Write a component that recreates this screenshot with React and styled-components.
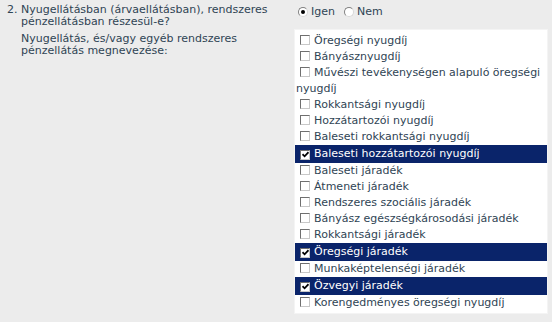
import styled, { createGlobalStyle } from "styled-components";

const GlobalStyle = createGlobalStyle`
  html, body {
    margin: 0;
    padding: 0;
    background: #ececec;
  }
  body {
    font-family: "DejaVu Sans", Verdana, sans-serif;
    font-size: 11px;
    color: #2f4454;
  }
`;

const items = [
  { label: "Öregségi nyugdíj" },
  { label: "Bányásznyugdíj" },
  { label: "Művészi tevékenységen alapuló öregségi nyugdíj" },
  { label: "Rokkantsági nyugdíj" },
  { label: "Hozzátartozói nyugdíj" },
  { label: "Baleseti rokkantsági nyugdíj" },
  { label: "Baleseti hozzátartozói nyugdíj", checked: true },
  { label: "Baleseti járadék" },
  { label: "Átmeneti járadék" },
  { label: "Rendszeres szociális járadék" },
  { label: "Bányász egészségkárosodási járadék" },
  { label: "Rokkantsági járadék" },
  { label: "Öregségi járadék", checked: true },
  { label: "Munkaképtelenségi járadék" },
  { label: "Özvegyi járadék", checked: true },
  { label: "Korengedményes öregségi nyugdíj" },
];

// pipa a bejelölt dobozokba
const Tick = () => (
  <svg width="7" height="7" viewBox="0 0 7 7">
    <path d="M0.5 3.2 L2.6 5.3 L6.5 1.2" fill="none" stroke="#000" strokeWidth="1.8" />
  </svg>
);

const App = () => {
  return (
    <>
      <GlobalStyle />
      <St.Form>
        <St.Row>
          <St.Label>
            <St.Num>2.</St.Num>
            <span>Nyugellátásban (árvaellátásban), rendszeres pénzellátásban részesül-e?</span>
          </St.Label>
          <St.RadioGroup>
            <St.RadioLabel>
              <St.Radio $checked />
              Igen
            </St.RadioLabel>
            <St.RadioLabel>
              <St.Radio />
              Nem
            </St.RadioLabel>
          </St.RadioGroup>
        </St.Row>

        <St.Row>
          <St.SubLabel>Nyugellátás, és/vagy egyéb rendszeres pénzellátás megnevezése:</St.SubLabel>
          <St.ListBox>
            {items.map((item) => (
              <St.Item key={item.label} $checked={item.checked}>
                <St.Check>{item.checked && <Tick />}</St.Check>
                {item.label}
              </St.Item>
            ))}
          </St.ListBox>
        </St.Row>
      </St.Form>
    </>
  );
};

export default App;

const St = {
  Form: styled.div`
    display: flex;
    flex-direction: column;
    gap: 1px;
    padding-top: 4px;
  `,

  Row: styled.div`
    display: grid;
    grid-template-columns: 294px 254px;
    align-items: start;
  `,

  Label: styled.div`
    display: flex;
    padding-left: 7px;
    padding-right: 20px;
    line-height: 12px;
  `,

  Num: styled.span`
    flex: none;
    width: 14px;
  `,

  SubLabel: styled.div`
    padding-left: 21px;
    padding-right: 30px;
    padding-top: 4px;
    line-height: 12px;
  `,

  RadioGroup: styled.div`
    display: flex;
    gap: 9px;
    padding-left: 4px;
    padding-top: 1px;
  `,

  RadioLabel: styled.label`
    display: flex;
    align-items: center;
    gap: 3px;
  `,

  Radio: styled.span`
    position: relative;
    box-sizing: border-box;
    width: 10px;
    height: 10px;
    border-radius: 50%;
    border: 1px solid;
    border-color: #808080 #d8d8d8 #d8d8d8 #808080;
    background: #fff;

    &::after {
      content: "";
      display: ${({ $checked }) => ($checked ? "block" : "none")};
      position: absolute;
      left: 2px;
      top: 2px;
      width: 4px;
      height: 4px;
      border-radius: 50%;
      background: #000;
    }
  `,

  ListBox: styled.div`
    box-sizing: border-box;
    background: #fff;
    border: 1px solid #f4f4f4;
    padding: 3px 0 2px;
  `,

  Item: styled.div`
    line-height: 16px;
    padding: ${({ $checked }) => ($checked ? "1px 1px" : "0 1px")};
    color: ${({ $checked }) => ($checked ? "#fff" : "inherit")};
    background: ${({ $checked }) => ($checked ? "#0a246a" : "transparent")};
  `,

  Check: styled.span`
    display: inline-flex;
    align-items: center;
    justify-content: center;
    box-sizing: border-box;
    width: 10px;
    height: 10px;
    margin: 0 4px 0 4px;
    vertical-align: -1px;
    border: 1px solid;
    border-color: #6f6f6f #c8c8c8 #c8c8c8 #6f6f6f;
    background: #fff;
  `,
};
